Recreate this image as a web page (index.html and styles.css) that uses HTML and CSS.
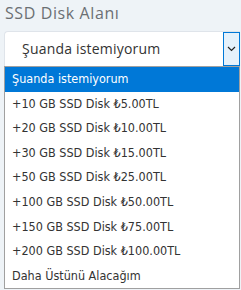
FILE: index.html
```html
<!DOCTYPE html>
<html lang="tr">
<head>
    <meta charset="UTF-8">
    <title>SSD Disk Alanı</title>
    <link rel="stylesheet" href="styles.css">
</head>
<body>
    <div class="field">
        <label class="field-label">SSD Disk Alanı</label>

        <div class="select-box">
            <span class="select-value">Şuanda istemiyorum</span>
            <span class="select-arrow">
                <svg width="9" height="6" viewBox="0 0 9 6">
                    <path d="M1 1 L4.5 4.5 L8 1" fill="none" stroke="#222" stroke-width="1.2"/>
                </svg>
            </span>
        </div>

        <!-- opened option list -->
        <ul class="options">
            <li class="option selected">Şuanda istemiyorum</li>
            <li class="option">+10 GB SSD Disk ₺5.00TL</li>
            <li class="option">+20 GB SSD Disk ₺10.00TL</li>
            <li class="option">+30 GB SSD Disk ₺15.00TL</li>
            <li class="option">+50 GB SSD Disk ₺25.00TL</li>
            <li class="option">+100 GB SSD Disk ₺50.00TL</li>
            <li class="option">+150 GB SSD Disk ₺75.00TL</li>
            <li class="option">+200 GB SSD Disk ₺100.00TL</li>
            <li class="option">Daha Üstünü Alacağım</li>
        </ul>
    </div>
</body>
</html>
```

FILE: styles.css
```css
:root {
    --page-bg: #eef3f7;
    --label-color: #6b6f73;
    --text-color: #333333;
    --highlight: #0078d7;
    --list-border: #a0a0a0;
}

body {
    margin: 0;
    background-color: var(--page-bg);
    font-family: 'Open Sans', Arial, sans-serif;
}

.field {
    padding: 3px 1px 0 4px;
}

.field-label {
    display: block;
    margin-left: 1px;
    font-size: 16px;
    letter-spacing: 0.6px;
    line-height: 21px;
    color: var(--label-color);
}

.select-box {
    display: flex;
    align-items: stretch;
    height: 34px;
    margin-top: 7px;
    background: white;
    border-top: 1px solid #dfe4ea;
    border-left: 1px solid #dfe4ea;
    border-radius: 4px 0 0 0;
}

.select-value {
    flex: 1;
    padding-left: 17px;
    font-size: 14px;
    letter-spacing: 0.2px;
    line-height: 33px;
    color: var(--text-color);
}

.select-arrow {
    display: flex;
    align-items: center;
    justify-content: center;
    width: 15px;
    background: #e5f1fb;
    border: 1px solid var(--highlight);
}

.options {
    list-style: none;
    margin: 0;
    padding: 0;
    background: white;
    border: 1px solid var(--list-border);
    font-family: 'DejaVu Sans Condensed', 'DejaVu Sans', Tahoma, sans-serif;
    font-size: 12.5px;
}

.option {
    height: 24.6px;
    line-height: 24px;
    padding-left: 7px;
    color: var(--text-color);
}

.option.selected {
    background: var(--highlight);
    color: white;
}
```
